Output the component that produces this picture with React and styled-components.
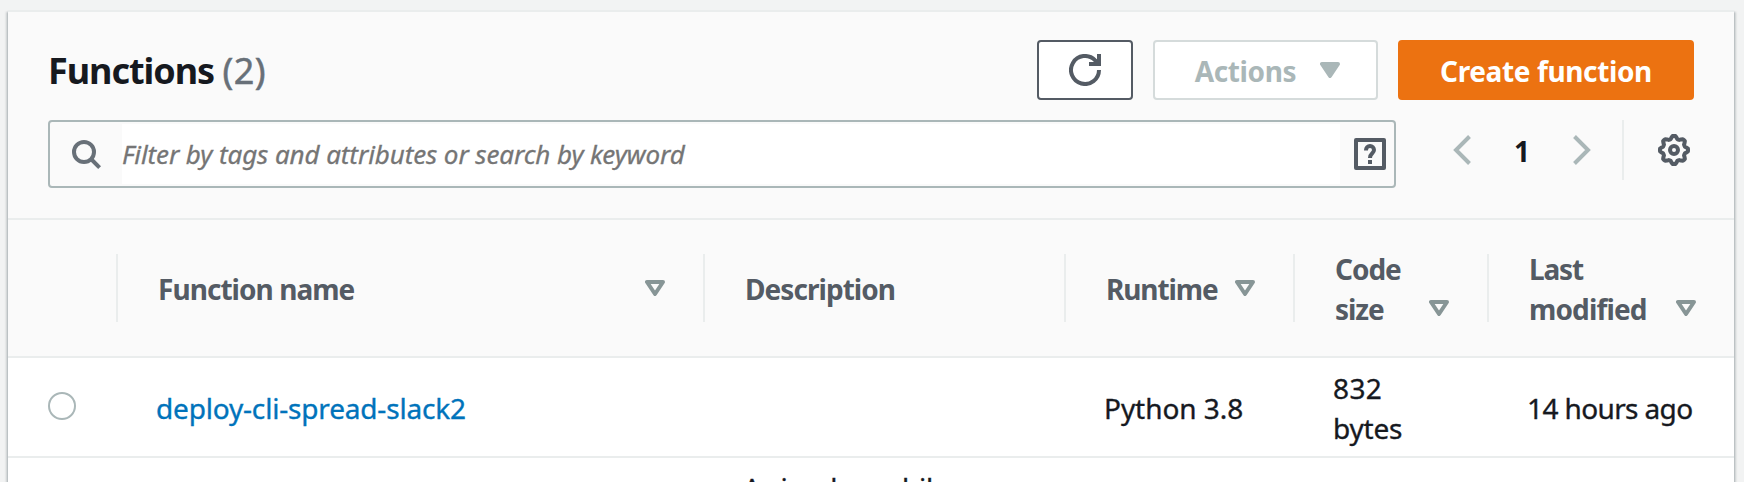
import React from "react";
import styled, { createGlobalStyle } from "styled-components";

const GlobalStyle = createGlobalStyle`
  *, *::before, *::after { box-sizing: border-box; }
  html { overflow: hidden; }
  body {
    margin: 0;
    height: 482px;
    overflow: hidden;
    background: #f2f3f3;
    color: #16191f;
    font: 400 28px/40px "Noto Sans", "Open Sans", sans-serif;
  }
`;

const Page = styled.div`
  height: 482px;
  padding: 10px 10px 0 8px;
  overflow: hidden;
`;

const Panel = styled.section`
  width: 1726px;
  height: 600px;
  background: #fff;
  border-top: 2px solid #eaeded;
  box-shadow: 0 2px 2px rgba(0, 28, 36, 0.3), 2px 2px 2px rgba(0, 28, 36, 0.15),
    -2px 2px 2px rgba(0, 28, 36, 0.15);
`;

const PanelHeader = styled.header`
  display: flex;
  flex-direction: column;
  gap: 20px;
  height: 208px;
  padding: 28px 40px 0;
  background: #fafafa;
  border-bottom: 2px solid #eaeded;
`;

const TitleRow = styled.div`
  display: flex;
  align-items: center;
  height: 60px;
`;

const Title = styled.h2`
  flex: 1;
  margin: 0;
  padding-top: 2px;
  font-size: 36px;
  font-weight: 700;
  line-height: 44px;
  letter-spacing: -1.05px;
`;

const Count = styled.span`
  color: #687078;
  font-weight: 400;
  letter-spacing: 0.5px;
  -webkit-text-stroke: 0.5px currentColor;
`;

const ButtonGroup = styled.div`
  display: flex;
  gap: 20px;
`;

const palettes = {
  normal: { bg: "#fff", border: "#545b64", fg: "#545b64" },
  disabled: { bg: "#fff", border: "#d5dbdb", fg: "#aab7b8" },
  primary: { bg: "#ec7211", border: "#ec7211", fg: "#fff" },
};

const Button = styled.button`
  display: flex;
  align-items: center;
  justify-content: center;
  gap: 24px;
  width: ${({ $width }) => $width}px;
  height: 60px;
  padding: 0 0 0 ${({ $shift = 0 }) => $shift}px;
  border: 2px solid ${({ $kind }) => palettes[$kind].border};
  border-radius: 4px;
  background: ${({ $kind }) => palettes[$kind].bg};
  color: ${({ $kind }) => palettes[$kind].fg};
  font: inherit;
  font-weight: 700;
  letter-spacing: -0.38px;
  white-space: nowrap;
`;

const Label = styled.span`
  margin: 1px 0 -1px;
`;

const Toolbar = styled.div`
  display: flex;
  align-items: flex-start;
`;

const SearchBox = styled.div`
  display: flex;
  width: 1348px;
  height: 68px;
  padding: 2px 0;
  border: 2px solid #aab7b8;
  border-radius: 4px;
`;

const SearchIconSlot = styled.div`
  display: flex;
  align-items: center;
  width: 72px;
  padding: 2px 0 0 22px;
`;

const SearchInput = styled.input`
  flex: 1;
  min-width: 0;
  padding: 0;
  border: 0;
  outline: 0;
  background: #fff;
  font: italic 400 26px/40px "Noto Sans", "Open Sans", sans-serif;
  letter-spacing: -0.1px;

  &::placeholder {
    color: #757575;
    opacity: 1;
    -webkit-text-stroke: 0.3px #757575;
  }
`;

const HelpSlot = styled.div`
  display: flex;
  align-items: center;
  width: 54px;
  padding: 0 0 0 14px;
`;

const Pager = styled.nav`
  display: flex;
  align-items: center;
  height: 60px;
  padding-left: 57px;
  font-weight: 700;
`;

const PageNumber = styled.span`
  width: 102px;
  padding: 2px 0 0;
  text-align: center;
`;

const Preferences = styled.div`
  display: flex;
  align-items: center;
  height: 60px;
  margin-left: 31px;
  padding-left: 34px;
  border-left: 2px solid #eaeded;
`;

const columns = "110px 587px 361px 229px 194px 245px";

const HeadRow = styled.div`
  display: grid;
  grid-template-columns: ${columns};
  align-items: center;
  height: 138px;
  background: #fafafa;
  border-bottom: 2px solid #eaeded;
`;

const HeadCell = styled.div`
  display: flex;
  align-items: ${({ $wrap }) => ($wrap ? "flex-end" : "center")};
  justify-content: space-between;
  height: ${({ $wrap }) => ($wrap ? 80 : 68)}px;
  padding: 0 ${({ $last }) => ($last ? 38 : 40)}px 0 40px;
  background: ${({ $last }) =>
    $last
      ? "none"
      : "linear-gradient(#eaeded, #eaeded) right center / 2px 68px no-repeat"};
  color: #545b64;
  font-weight: 700;
  letter-spacing: ${({ $tracking = -0.95 }) => $tracking}px;
`;

const SortSlot = styled.span`
  display: flex;
  align-items: center;
  height: 40px;
`;

const BodyRow = styled.div`
  display: grid;
  grid-template-columns: ${columns};
  align-items: center;
  height: 100px;
  padding-top: 2px;
  border-bottom: 2px solid #eaeded;
  -webkit-text-stroke: 0.35px currentColor;
`;

const Cell = styled.div`
  padding-left: ${({ $inset = 38 }) => $inset}px;
  letter-spacing: ${({ $tracking = 0 }) => $tracking}px;
  white-space: nowrap;
`;

const Radio = styled.span`
  display: block;
  width: 28px;
  height: 28px;
  margin-bottom: 4px;
  border: 2px solid #aab7b8;
  border-radius: 50%;
`;

const FunctionLink = styled.a`
  color: #0073bb;
`;

const Tracked = styled.span`
  letter-spacing: ${({ $by }) => $by}px;
`;

const Glyph = styled.svg`
  display: block;
  flex: none;
`;

const RefreshIcon = () => (
  <Glyph width="32" height="32" viewBox="0 0 32 32" fill="none" stroke="currentColor" strokeWidth="4">
    <path d="M30 16A14 14 0 1 1 26 6.2L29 9" />
    <path d="M30 0V10H20" />
  </Glyph>
);

const SearchIcon = () => (
  <Glyph width="30" height="30" viewBox="0 0 30 30" fill="none" stroke="#687078" strokeWidth="4">
    <circle cx="12" cy="12" r="10" />
    <path d="M19 19L27.6 27.6" />
  </Glyph>
);

const HelpIcon = () => (
  <Glyph width="32" height="32" viewBox="0 0 32 32" fill="none" stroke="#545b64" strokeWidth="4">
    <rect x="2" y="2" width="28" height="28" strokeLinejoin="round" />
    <path d="M12 12.5V12A4 4 0 0 1 20 12C20 15.5 16 15 16 20" />
    <path d="M16 22V26" />
  </Glyph>
);

const Chevron = ({ flip }) => (
  <Glyph width="18" height="30" viewBox="0 0 18 30" fill="none" stroke="#aab7b8" strokeWidth="4">
    <path d={flip ? "M1.5 1.5L15 15L1.5 28.5" : "M16.5 1.5L3 15L16.5 28.5"} />
  </Glyph>
);

const gearOutline = Array.from({ length: 64 }, (_, i) => {
  const angle = (i / 64) * Math.PI * 2;
  const wave = Math.cos(angle * 8);
  const radius = 12.7 + 1.4 * Math.tanh(wave * 2.4);
  return `${(16 + radius * Math.cos(angle)).toFixed(2)},${(16 + radius * Math.sin(angle)).toFixed(2)}`;
}).join(" ");

const GearIcon = () => (
  <Glyph width="32" height="32" viewBox="0 0 32 32" fill="none" stroke="#545b64" strokeWidth="4">
    <polygon points={gearOutline} strokeLinejoin="round" />
    <circle cx="16" cy="16" r="4" />
  </Glyph>
);

const CaretIcon = () => (
  <Glyph width="20" height="16" viewBox="0 0 20 16" fill="currentColor" stroke="currentColor" strokeWidth="4" strokeLinejoin="round">
    <path d="M2 2H18L10 14Z" />
  </Glyph>
);

const SortIcon = () => (
  <Glyph width="20" height="16" viewBox="0 0 20 16" fill="none" stroke="#879596" strokeWidth="4" strokeLinejoin="round">
    <path d="M2 2H18L10 14Z" />
  </Glyph>
);

const Sort = () => (
  <SortSlot>
    <SortIcon />
  </SortSlot>
);

export default function App() {
  return (
    <>
      <GlobalStyle />
      <Page>
        <Panel>
          <PanelHeader>
            <TitleRow>
              <Title>
                Functions <Count>(2)</Count>
              </Title>
              <ButtonGroup>
                <Button $kind="normal" $width={96} aria-label="Refresh">
                  <RefreshIcon />
                </Button>
                <Button $kind="disabled" $width={225} $shift={4}>
                  <Label>Actions</Label> <CaretIcon />
                </Button>
                <Button $kind="primary" $width={296}>
                  <Label>Create function</Label>
                </Button>
              </ButtonGroup>
            </TitleRow>
            <Toolbar>
              <SearchBox>
                <SearchIconSlot>
                  <SearchIcon />
                </SearchIconSlot>
                <SearchInput placeholder="Filter by tags and attributes or search by keyword" />
                <HelpSlot>
                  <HelpIcon />
                </HelpSlot>
              </SearchBox>
              <Pager>
                <Chevron />
                <PageNumber>1</PageNumber>
                <Chevron flip />
              </Pager>
              <Preferences>
                <GearIcon />
              </Preferences>
            </Toolbar>
          </PanelHeader>
          <HeadRow>
            <HeadCell />
            <HeadCell>
              <Label>Function name</Label> <Sort />
            </HeadCell>
            <HeadCell>
              <Label>Description</Label>
            </HeadCell>
            <HeadCell $tracking={-1.1}>
              <Label>Runtime</Label> <Sort />
            </HeadCell>
            <HeadCell $wrap $tracking={-1.05}>
              <Label>
                Code
                <br />
                size
              </Label>
              <Sort />
            </HeadCell>
            <HeadCell $wrap $last $tracking={-0.85}>
              <Label>
                <Tracked $by={-1.2}>Last</Tracked>
                <br />
                modified
              </Label>
              <Sort />
            </HeadCell>
          </HeadRow>
          <BodyRow>
            <Cell $inset={40}>
              <Radio />
            </Cell>
            <Cell $tracking={-0.18}>
              <FunctionLink>deploy-cli-spread-slack2</FunctionLink>
            </Cell>
            <Cell />
            <Cell $tracking={-0.05}>Python 3.8</Cell>
            <Cell>
              <Tracked $by={0.4}>832</Tracked>
              <br />
              <Tracked $by={-0.2}>bytes</Tracked>
            </Cell>
            <Cell $tracking={-0.62}>14 hours ago</Cell>
          </BodyRow>
          <BodyRow>
            <Cell />
            <Cell />
            <Cell $tracking={-0.32}>
              A simple mobile
              <br />
              backend
            </Cell>
          </BodyRow>
        </Panel>
      </Page>
    </>
  );
}
